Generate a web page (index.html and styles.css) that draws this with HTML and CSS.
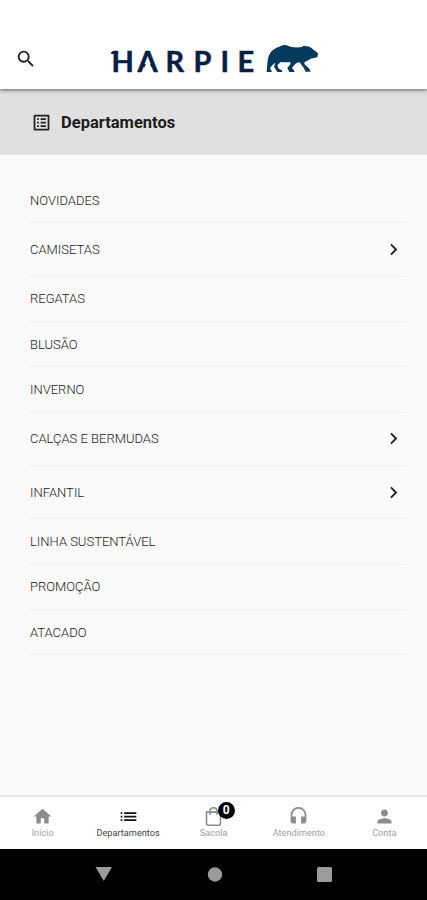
FILE: index.html
```html
<!DOCTYPE html>
<html lang="pt-BR">
<head>
<meta charset="utf-8">
<title>Harpie - Departamentos</title>
<link rel="stylesheet" href="styles.css">
</head>
<body>
<header class="topbar">
  <svg class="search" viewBox="0 0 24 24"><path d="M15.5 14h-.79l-.28-.27A6.47 6.47 0 0 0 16 9.5 6.5 6.5 0 1 0 9.5 16c1.61 0 3.09-.59 4.23-1.57l.27.28v.79l5 4.99L20.49 19l-4.99-5zm-6 0C7.01 14 5 11.99 5 9.5S7.01 5 9.5 5 14 7.01 14 9.5 11.99 14 9.5 14z"/></svg>
  <svg class="logo" viewBox="0 0 210 32">
    <text class="wordmark" y="28" x="1.5 27.5 55.5 83.5 110.5 127.5">HARPIE</text>
    <path class="gap" d="M37.900 15L42 25H33.800z"/>
    <path class="mark" d="M1 8.800L3 7h5v3H1z"/>
    <path class="mark" transform="translate(152 -4) scale(.3333)" d="M14 96L16 70Q17 45 30 32Q45 22 62 16Q72 12 85 20Q105 24 120 21Q126 15 130 19Q142 17 148 24L168 40L166 52L146 56Q138 62 128 66L127 72L142 86L146 95H131L124 82L112 66Q102 68 94 78L90 84L97 92V96H82L76 84L86 72L84 66Q70 68 56 66L46 76L50 86L60 91V96H46L36 80L40 68Q28 76 24 84L30 96Z"/>
  </svg>
</header>
<div class="heading">
  <svg viewBox="0 0 24 24"><path d="M19 5v14H5V5h14m1.100-2H3.900c-.5 0-.9.4-.9.9v16.200c0 .4.400.9.9.9h16.200c.4 0 .9-.5.9-.9V3.900c0-.5-.5-.9-.9-.9zM11 7h6v2h-6V7zm0 4h6v2h-6v-2zm0 4h6v2h-6v-2zM7 7h2v2H7V7zm0 4h2v2H7v-2zm0 4h2v2H7v-2z"/></svg>
  <h1>Departamentos</h1>
</div>
<main>
  <ul class="menu">
    <li><span>NOVIDADES</span></li>
    <li class="parent"><span>CAMISETAS</span><svg viewBox="0 0 24 24"><path d="M10 6L8.590 7.410 13.170 12l-4.580 4.590L10 18l6-6z"/></svg></li>
    <li><span>REGATAS</span></li>
    <li><span>BLUSÃO</span></li>
    <li><span>INVERNO</span></li>
    <li class="parent"><span>CALÇAS E BERMUDAS</span><svg viewBox="0 0 24 24"><path d="M10 6L8.590 7.410 13.170 12l-4.580 4.590L10 18l6-6z"/></svg></li>
    <li class="parent"><span>INFANTIL</span><svg viewBox="0 0 24 24"><path d="M10 6L8.590 7.410 13.170 12l-4.580 4.590L10 18l6-6z"/></svg></li>
    <li><span>LINHA SUSTENTÁVEL</span></li>
    <li><span>PROMOÇÃO</span></li>
    <li><span>ATACADO</span></li>
  </ul>
</main>
<nav class="tabs">
  <a class="tab"><svg viewBox="0 0 24 24"><path d="M10 20v-6h4v6h5v-8h3L12 3 2 12h3v8z"/></svg><span>Início</span></a>
  <a class="tab active"><svg viewBox="0 0 24 24"><path d="M3 13h2v-2H3v2zm0 4h2v-2H3v2zm0-8h2V7H3v2zm4 4h14v-2H7v2zm0 4h14v-2H7v2zM7 7v2h14V7H7z"/></svg><span>Departamentos</span></a>
  <a class="tab"><svg viewBox="0 0 24 24"><path class="line" d="M4 7h16v13q0 2-2 2H6q-2 0-2-2zM8 10V6q0-4 4-4t4 4v4"/></svg><b class="badge">0</b><span>Sacola</span></a>
  <a class="tab"><svg viewBox="0 0 24 24"><path d="M12 1a9 9 0 0 0-9 9v7c0 1.660 1.340 3 3 3h3v-8H5v-2a7 7 0 0 1 14 0v2h-4v8h3c1.660 0 3-1.340 3-3v-7a9 9 0 0 0-9-9z"/></svg><span>Atendimento</span></a>
  <a class="tab"><svg viewBox="0 0 24 24"><path d="M12 12c2.210 0 4-1.790 4-4s-1.790-4-4-4-4 1.790-4 4 1.790 4 4 4zm0 2c-2.670 0-8 1.340-8 4v2h16v-2c0-2.660-5.330-4-8-4z"/></svg><span>Conta</span></a>
</nav>
<footer class="system">
  <svg viewBox="0 0 18 16"><path d="M.5 1h16.500L8.750 15z"/></svg>
  <svg viewBox="0 0 18 16"><circle cx="9" cy="8.500" r="7.200"/></svg>
  <svg viewBox="0 0 18 16"><rect x="1" y="1" width="15" height="15" rx="1.500"/></svg>
</footer>
</body>
</html>
```
FILE: styles.css
```css
* { box-sizing: border-box; }
body {
  margin: 0;
  height: 900px;
  display: flex;
  flex-direction: column;
  overflow: hidden;
  background: #fafafa;
  font-family: Roboto, sans-serif;
}
svg { display: block; flex: none; }
.topbar {
  height: 89px;
  padding: 44px 0 0 15px;
  display: flex;
  background: #fff;
  box-shadow: 0 1px 4px rgba(0, 0, 0, .6);
  z-index: 1;
}
.search { width: 22px; height: 22px; margin-top: 4px; fill: #222; }
.logo { width: 210px; height: 32px; margin-left: 73px; overflow: visible; }
.wordmark {
  font: bold 29px Lato, sans-serif;
  fill: #071f45;
  stroke: #071f45;
  stroke-width: .5;
}
.gap { fill: #fff; }
.mark { fill: #043b5c; }
.mark:nth-of-type(2) { fill: #071f45; }
.heading {
  height: 66px;
  padding: 1px 0 0 31px;
  display: flex;
  align-items: center;
  background: #e0e0e0;
}
.heading svg { width: 21px; height: 21px; fill: #222; }
.heading h1 {
  margin: 0 0 0 9px;
  font-size: 16.500px;
  font-weight: 700;
  color: #1c1c1c;
}
main { flex: 1; padding: 23px 20px 0 30px; }
.menu { margin: 0; padding: 0; list-style: none; }
.menu li {
  height: 45.3px;
  display: flex;
  align-items: center;
  justify-content: space-between;
  border-bottom: 1px solid #f3f3f3;
  font-size: 13px;
  font-weight: 300;
  color: #1c1c1c;
}
.menu .parent { height: 53.4px; }
.menu svg { width: 23px; height: 23px; margin-right: 2px; fill: #222; }
.tabs {
  height: 54px;
  padding-bottom: 1px;
  display: grid;
  grid-template-columns: repeat(5, 1fr);
  background: #fff;
  border-top: 2px solid #e5e5e5;
}
.tab {
  position: relative;
  display: flex;
  flex-direction: column;
  align-items: center;
  padding-top: 9px;
  font-size: 9.200px;
  line-height: 12px;
  color: #a0a0a0;
}
.tab svg { width: 21px; height: 21px; fill: #8c8c8c; }
.tab.active { color: #444; }
.tab.active svg { fill: #111; }
.tab .line { fill: none; stroke: #8c8c8c; stroke-width: 1.800; }
.badge {
  position: absolute;
  left: 47px;
  top: 5px;
  width: 17px;
  height: 17px;
  border-radius: 50%;
  background: #000;
  color: #fff;
  font-size: 12px;
  line-height: 17px;
  text-align: center;
}
.system {
  height: 51px;
  padding: 17px 93px 0 95px;
  display: flex;
  justify-content: space-between;
  background: #000;
}
.system svg { width: 18px; height: 16px; fill: #9b9b9b; }
```
